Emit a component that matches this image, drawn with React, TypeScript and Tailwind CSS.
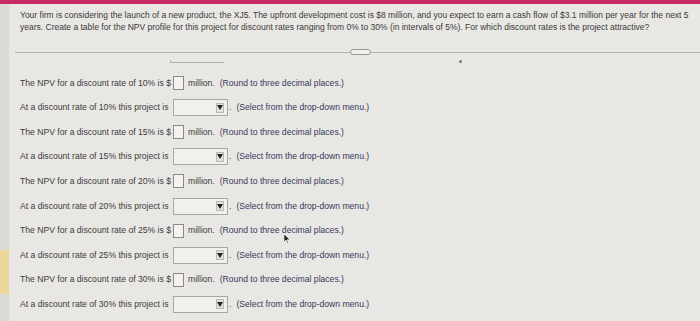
import React from "react";

const rates = [10, 15, 20, 25, 30];

function NpvRow({ r }: { r: number }) {
  return (
    <div className="flex items-center h-[24.55px]">
      <span className="w-[153px] whitespace-nowrap">The NPV for a discount rate of {r}% is $</span>
      <span className="w-[11px] h-[14px] border border-[#8a8a8a] bg-[#f3f2ef]" />
      <span className="ml-[4px]">million.</span>
      <span className="ml-[5px] text-[#353a5c]">(Round to three decimal places.)</span>
    </div>
  );
}

function SelRow({ r }: { r: number }) {
  return (
    <div className="flex items-center h-[24.55px]">
      <span className="w-[153px] whitespace-nowrap">At a discount rate of {r}% this project is</span>
      <span className="w-[55px] h-[17px] border border-[#a7a7a7] bg-[#f1f0ed] flex items-center justify-end pr-[3px]">
        <span className="w-[8px] h-[10px] bg-[#e2e1de] border border-[#b8b8b8] flex items-center justify-center">
          <svg width="6" height="5" viewBox="0 0 6 5"><path d="M0 0 L6 0 L3 5 Z" fill="#222" /></svg>
        </span>
      </span>
      <span className="ml-[1px]">.</span>
      <span className="ml-[5px] text-[#353a5c]">(Select from the drop-down menu.)</span>
    </div>
  );
}

export default function App() {
  return (
    <div className="w-[700px] h-[321px] overflow-hidden bg-[#e9e7e4] flex flex-col text-[#3c3c3c]" style={{ fontFamily: '"Liberation Sans", Arial, sans-serif' }}>
      <div className="h-[4px] bg-[#c82a66] shrink-0" />
      <div className="flex flex-1">
        <div className="w-[9px] bg-[#dcdad6] flex flex-col shrink-0">
          <div className="h-[246px]" />
          <div className="h-[44px] bg-[#ecd79a]" />
        </div>
        <div className="flex-1 flex flex-col relative">
          <div className="pl-[11px] pt-[5px] text-[8.5px] leading-[12px] text-[#3a3a3a] pr-[2px]">
            Your firm is considering the launch of a new product, the XJ5. The upfront development cost is $8 million, and you expect to earn a cash flow of $3.1 million per year for the next 5 years. Create a table for the NPV profile for this project for discount rates ranging from 0% to 30% (in intervals of 5%). For which discount rates is the project attractive?
          </div>
          <div className="mt-[16px] flex items-center h-[6px] ml-[6px]">
            <div className="w-[335px] h-[1px] bg-[#b5b3b0]" />
            <div className="w-[21px] h-[6px] rounded-full border border-[#9a9896] bg-[#f2f1ee]" />
            <div className="flex-1 h-[1px] bg-[#b5b3b0]" />
          </div>
          <div className="ml-[161px] mt-[5px] w-[54px] h-[3px] border-l border-b border-[#b0aeab]" />
          <div className="absolute left-[450px] top-[56px] w-[3px] h-[3px] rounded-full bg-[#777]" />
          <div className="pl-[11px] mt-[8px] text-[8.6px] flex flex-col">
            {rates.map((r) => (
              <React.Fragment key={r}>
                <NpvRow r={r} />
                <SelRow r={r} />
              </React.Fragment>
            ))}
          </div>
          <svg className="absolute left-[275px] top-[230px]" width="7" height="10" viewBox="0 0 7 10">
            <path d="M0 0 L0 8 L2 6 L3.5 9.5 L4.5 9 L3 5.8 L6 5.8 Z" fill="#222" stroke="#fff" strokeWidth="0.6" />
          </svg>
        </div>
      </div>
    </div>
  );
}
